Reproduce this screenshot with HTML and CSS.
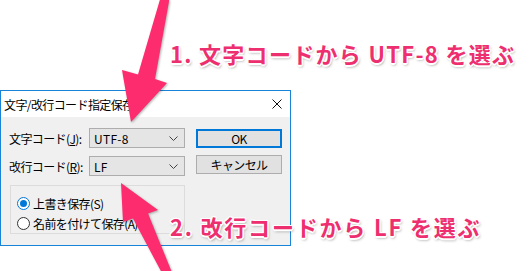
FILE: index.html
```html
<!DOCTYPE html>
<html lang="ja">
<head>
    <meta charset="UTF-8">
    <meta name="viewport" content="width=device-width, initial-scale=1.0">
    <title>文字/改行コード指定保存</title>
    <link rel="stylesheet" href="styles.css">
</head>
<body>
    <div class="canvas">
        <div class="dialog">
            <div class="titlebar">
                <span class="title">文字/改行コード指定保存</span>
                <svg class="close" width="10" height="10" viewBox="0 0 10 10">
                    <path d="M0.5 0.5 L9.5 9.5 M9.5 0.5 L0.5 9.5" stroke="#111" stroke-width="1" fill="none"/>
                </svg>
            </div>
            <div class="body">
                <div class="main">
                    <div class="field">
                        <span class="label">文字コード(<u>J</u>):</span>
                        <div class="combo">
                            <span>UTF-8</span>
                            <svg class="chev" width="9" height="5" viewBox="0 0 9 5"><path d="M0.5 0.5 L4.5 4.5 L8.5 0.5" stroke="#444" fill="none"/></svg>
                        </div>
                    </div>
                    <div class="field">
                        <span class="label">改行コード(<u>R</u>):</span>
                        <div class="combo">
                            <span>LF</span>
                            <svg class="chev" width="9" height="5" viewBox="0 0 9 5"><path d="M0.5 0.5 L4.5 4.5 L8.5 0.5" stroke="#444" fill="none"/></svg>
                        </div>
                    </div>
                    <div class="group">
                        <div class="radio checked"><span class="dot"></span>上書き保存(S)</div>
                        <div class="radio"><span class="dot"></span>名前を付けて保存(A)</div>
                    </div>
                </div>
                <div class="actions">
                    <button class="btn default">OK</button>
                    <button class="btn">キャンセル</button>
                </div>
            </div>
        </div>

        <!-- annotation arrows -->
        <svg class="arrows" width="529" height="271" viewBox="0 0 529 271">
            <polygon points="161,-4 170,-4 155,79 167,83 131,122 122,70 138,74.6"/>
            <polygon points="163,275 173,275 148,213.4 158,210 121,183 123,222 133,218.6"/>
        </svg>
        <p class="note note-1">1. 文字コードから UTF-8 を選ぶ</p>
        <p class="note note-2">2. 改行コードから LF を選ぶ</p>
    </div>
</body>
</html>
```

FILE: styles.css
```css
:root {
    --accent: #1883d7;
    --pink: #fd2c6e;
    --note: #ee2f6f;
}

body {
    margin: 0;
    background: #fff;
    font-family: "Noto Sans CJK JP", "Noto Sans", sans-serif;
    color: #000;
}

.canvas {
    position: relative;
    width: 529px;
    height: 271px;
    padding-top: 90px;
    box-sizing: border-box;
    overflow: hidden;
}

/* dialog window */
.dialog {
    width: 291px;
    height: 156px;
    border: 1px solid var(--accent);
    box-sizing: border-box;
    display: flex;
    flex-direction: column;
    letter-spacing: -0.6px;
}

.titlebar {
    height: 26px;
    background: #fff;
    display: flex;
    align-items: center;
    justify-content: space-between;
    padding: 0 8px 0 3px;
    font-size: 12px;
}

.body {
    flex: 1;
    background: #f0f0f0;
    display: flex;
    padding: 11px 0 0 8px;
    font-size: 12px;
}

.main {
    width: 176px;
}

.field {
    display: flex;
    align-items: center;
    height: 20px;
    margin-bottom: 8px;
}

.label {
    width: 80px;
}

.combo {
    width: 96px;
    height: 20px;
    box-sizing: border-box;
    border: 1px solid #adadad;
    background: #e5e5e5;
    display: flex;
    align-items: center;
    justify-content: space-between;
    padding: 0 6px 0 4px;
    letter-spacing: 0.3px;
}

.group {
    margin: 9px 0 0 1px;
    width: 175px;
    height: 49px;
    box-sizing: border-box;
    border: 1px solid #dcdcdc;
    padding: 7px 0 0 6px;
}

.radio {
    display: flex;
    align-items: center;
    height: 20px;
}

.dot {
    width: 13px;
    height: 13px;
    box-sizing: border-box;
    border: 1px solid #333;
    border-radius: 50%;
    background: #fff;
    margin-right: 3px;
    position: relative;
}

.radio.checked .dot {
    border-color: #0078d7;
}

.radio.checked .dot::after {
    content: "";
    position: absolute;
    left: 2px;
    top: 2px;
    width: 7px;
    height: 7px;
    border-radius: 50%;
    background: #0078d7;
}

.actions {
    margin-left: 11px;
    padding-top: 1px;
    display: flex;
    flex-direction: column;
    gap: 7px;
}

.btn {
    width: 86px;
    height: 19px;
    box-sizing: border-box;
    border: 1px solid #adadad;
    background: #e1e1e1;
    font: inherit;
    font-size: 12px;
    letter-spacing: -0.6px;
    padding: 0;
    line-height: 1;
    color: #000;
}

.btn.default {
    border: 2px solid #0078d7;
}

/* annotations */
.arrows {
    position: absolute;
    left: 0;
    top: 0;
    pointer-events: none;
    fill: var(--pink);
    filter: drop-shadow(1px 1px 1px rgba(0, 0, 0, 0.3));
}

.note {
    position: absolute;
    left: 170px;
    margin: 0;
    font-size: 22px;
    line-height: 22px;
    font-weight: 700;
    letter-spacing: 1.3px;
    color: var(--note);
    white-space: nowrap;
    text-shadow:
        1.5px 0 0 #fff, -1.5px 0 0 #fff, 0 1.5px 0 #fff, 0 -1.5px 0 #fff,
        1px 1px 0 #fff, -1px -1px 0 #fff, 1px -1px 0 #fff, -1px 1px 0 #fff,
        1px 2px 3px rgba(0, 0, 0, 0.45);
}

.note-1 {
    top: 42px;
}

.note-2 {
    top: 215px;
    letter-spacing: 1.8px;
}
```
